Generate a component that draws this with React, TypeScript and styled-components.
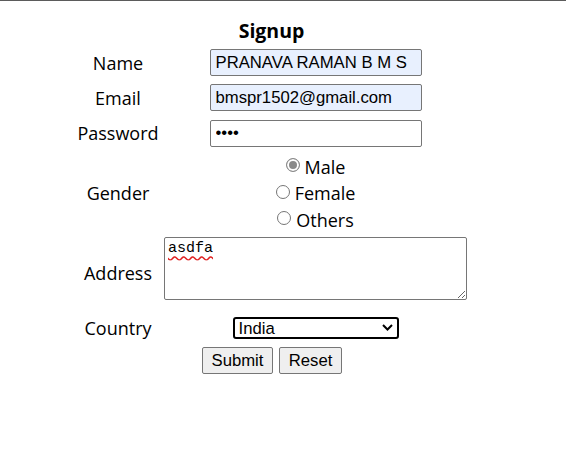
import React from "react";
import styled, { createGlobalStyle } from "styled-components";

const GlobalStyle = createGlobalStyle`
  html, body { margin: 0; padding: 0; background: #ffffff; }
  body { font-family: "Open Sans", "Noto Sans", sans-serif; color: #000; }
`;

const Page = styled.div`
  border-top: 1px solid #5b5b5b;
  padding: 15px 0 0 74px;
  min-height: 460px;
  box-sizing: border-box;
`;

const Form = styled.form`
  width: 393px;
  display: flex;
  flex-direction: column;
`;

const Title = styled.div`
  height: 29px;
  line-height: 29px;
  text-align: center;
  font-weight: 700;
  font-size: 19.5px;
  padding-left: 2px;
`;

const Row = styled.div<{ $h: number }>`
  display: grid;
  grid-template-columns: 88px 303px;
  column-gap: 2px;
  height: ${(p) => p.$h}px;
  align-items: center;
  justify-items: center;
`;

const Label = styled.label`
  font-size: 18px;
  white-space: nowrap;
`;

const TextInput = styled.input<{ $filled?: boolean }>`
  box-sizing: border-box;
  width: 212px;
  height: 27px;
  margin: 0;
  padding: 1px 5px;
  border: 1px solid #767676;
  border-radius: 2px;
  background: ${(p) => (p.$filled ? "#e8f0fe" : "#ffffff")};
  font-family: "Liberation Sans", Arial, sans-serif;
  font-size: 16.7px;
  color: #000;
  outline: none;
`;

const RadioGroup = styled.div`
  display: flex;
  flex-direction: column;
  align-items: center;
`;

const RadioLine = styled.label`
  display: flex;
  align-items: center;
  gap: 5px;
  height: 26.5px;
  font-size: 18px;
`;

const Radio = styled.input`
  appearance: none;
  flex-shrink: 0;
  width: 14px;
  height: 14px;
  margin: 0 0 3px 0;
  border: 1px solid #767676;
  border-radius: 50%;
  box-sizing: border-box;
  background: #fff;
  &:checked {
    border-color: #8a8a8a;
    background: #8a8a8a;
    box-shadow: inset 0 0 0 2px #fff;
  }
`;

const Area = styled.textarea`
  box-sizing: border-box;
  width: 303px;
  height: 63px;
  align-self: start;
  margin: 2px 0 0 0;
  padding: 2px 3px;
  border: 1px solid #767676;
  border-radius: 2px;
  font-family: "Liberation Mono", "DejaVu Sans Mono", monospace;
  font-size: 15px;
  color: #000;
  text-decoration: underline wavy #e02020;
  text-underline-offset: 3px;
  outline: none;
`;

const SelectWrap = styled.div`
  position: relative;
  width: 166px;
  height: 22px;
`;

const Select = styled.select`
  appearance: none;
  box-sizing: border-box;
  width: 166px;
  height: 22px;
  margin: 0;
  padding: 0 4px;
  border: 2px solid #000;
  border-radius: 3px;
  background: #fff;
  font-family: "Liberation Sans", Arial, sans-serif;
  font-size: 16.7px;
  color: #000;
  outline: none;
`;

const Chevron = styled.svg`
  position: absolute;
  right: 6px;
  top: 7px;
  pointer-events: none;
`;

const ButtonRow = styled.div`
  height: 31px;
  display: flex;
  justify-content: center;
  align-items: center;
  gap: 6px;
  padding-left: 3px;
`;

const Button = styled.button<{ $w: number }>`
  box-sizing: border-box;
  width: ${(p) => p.$w}px;
  height: 27px;
  margin: 0;
  padding: 0;
  border: 1px solid #767676;
  border-radius: 2px;
  background: #efefef;
  font-family: "Liberation Sans", Arial, sans-serif;
  font-size: 16.7px;
  color: #000;
`;

export default function App() {
  return (
    <>
      <GlobalStyle />
      <Page>
        <Form onSubmit={(e) => e.preventDefault()}>
          <Title>Signup</Title>
          <Row $h={35}>
            <Label>Name</Label>
            <TextInput $filled defaultValue="PRANAVA RAMAN B M S" />
          </Row>
          <Row $h={35}>
            <Label>Email</Label>
            <TextInput $filled defaultValue="bmspr1502@gmail.com" />
          </Row>
          <Row $h={36}>
            <Label>Password</Label>
            <TextInput type="password" defaultValue="abcd" />
          </Row>
          <Row $h={84}>
            <Label>Gender</Label>
            <RadioGroup>
              <RadioLine>
                <Radio type="radio" name="g" defaultChecked />
                Male
              </RadioLine>
              <RadioLine>
                <Radio type="radio" name="g" />
                Female
              </RadioLine>
              <RadioLine>
                <Radio type="radio" name="g" />
                Others
              </RadioLine>
            </RadioGroup>
          </Row>
          <Row $h={75}>
            <Label>Address</Label>
            <Area defaultValue="asdfa" spellCheck={false} />
          </Row>
          <Row $h={35}>
            <Label>Country</Label>
            <SelectWrap>
              <Select defaultValue="India">
                <option>India</option>
                <option>USA</option>
                <option>UK</option>
              </Select>
              <Chevron width="11" height="7" viewBox="0 0 11 7">
                <path d="M1 1 L5.5 5.5 L10 1" fill="none" stroke="#000" strokeWidth="2" />
              </Chevron>
            </SelectWrap>
          </Row>
          <ButtonRow>
            <Button type="submit" $w={71}>Submit</Button>
            <Button type="reset" $w={63}>Reset</Button>
          </ButtonRow>
        </Form>
      </Page>
    </>
  );
}
